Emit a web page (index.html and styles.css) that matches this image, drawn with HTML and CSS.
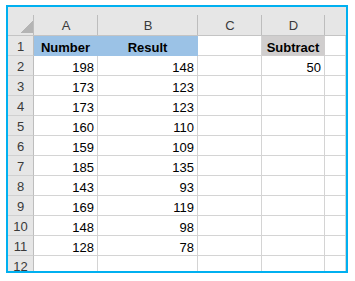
FILE: index.html
```html
<!DOCTYPE html>
<html>
<head>
<meta charset="utf-8">
<link rel="stylesheet" href="styles.css">
</head>
<body>
<div class="frame">
  <div class="sheet">
    <div class="hd corner"><div class="tri"></div></div>
    <div class="hd">A</div>
    <div class="hd">B</div>
    <div class="hd">C</div>
    <div class="hd">D</div>
    <div class="hd last"></div>

    <div class="rh">1</div>
    <div class="c ctr bold blue">Number</div>
    <div class="c ctr bold blue">Result</div>
    <div class="c"></div>
    <div class="c ctr bold grey">Subtract</div>
    <div class="c"></div>

    <div class="rh">2</div><div class="c">198</div><div class="c">148</div><div class="c"></div><div class="c">50</div><div class="c"></div>
    <div class="rh">3</div><div class="c">173</div><div class="c">123</div><div class="c"></div><div class="c"></div><div class="c"></div>
    <div class="rh">4</div><div class="c">173</div><div class="c">123</div><div class="c"></div><div class="c"></div><div class="c"></div>
    <div class="rh">5</div><div class="c">160</div><div class="c">110</div><div class="c"></div><div class="c"></div><div class="c"></div>
    <div class="rh">6</div><div class="c">159</div><div class="c">109</div><div class="c"></div><div class="c"></div><div class="c"></div>
    <div class="rh">7</div><div class="c">185</div><div class="c">135</div><div class="c"></div><div class="c"></div><div class="c"></div>
    <div class="rh">8</div><div class="c">143</div><div class="c">93</div><div class="c"></div><div class="c"></div><div class="c"></div>
    <div class="rh">9</div><div class="c">169</div><div class="c">119</div><div class="c"></div><div class="c"></div><div class="c"></div>
    <div class="rh">10</div><div class="c">148</div><div class="c">98</div><div class="c"></div><div class="c"></div><div class="c"></div>
    <div class="rh">11</div><div class="c">128</div><div class="c">78</div><div class="c"></div><div class="c"></div><div class="c"></div>
    <div class="rh">12</div><div class="c"></div><div class="c"></div><div class="c"></div><div class="c"></div><div class="c"></div>
  </div>
</div>
</body>
</html>
```

FILE: styles.css
```css
html, body {
  margin: 0;
  padding: 0;
  background: #ffffff;
}

body {
  font-family: "Liberation Sans", Arial, sans-serif;
  font-size: 13px;
}

.frame {
  margin: 5px 0 0 6px;
  width: 342px;
  height: 268px;
  box-sizing: border-box;
  border: 2px solid #00b0f0;
  overflow: hidden;
  background: #ffffff;
}

.sheet {
  display: grid;
  grid-template-columns: 26px 64px 100px 64px 63px 1fr;
  grid-template-rows: 29px;
  grid-auto-rows: 20px;
}

.hd {
  box-sizing: border-box;
  display: flex;
  align-items: flex-end;
  justify-content: center;
  padding-bottom: 2px;
  line-height: 15px;
  color: #3a3a3a;
  background: linear-gradient(#bdbdbd, #bdbdbd) right bottom / 1px 20px no-repeat, #e6e6e6;
  border-bottom: 1px solid #c4c4c4;
}

.hd.last {
  background: #e6e6e6;
}

.hd.corner {
  justify-content: flex-end;
  padding: 0 1px 2px 0;
}

.tri {
  width: 12px;
  height: 12px;
  background: linear-gradient(to bottom right, transparent 50%, #b4b4b4 50%);
}

.rh {
  box-sizing: border-box;
  display: flex;
  align-items: flex-end;
  justify-content: center;
  padding-bottom: 1px;
  line-height: 15px;
  color: #3a3a3a;
  background: #e6e6e6;
  border-right: 1px solid #bdbdbd;
  border-bottom: 1px solid #d0d0d0;
}

.c {
  box-sizing: border-box;
  display: flex;
  align-items: flex-end;
  justify-content: flex-end;
  padding-right: 3px;
  line-height: 15px;
  color: #000000;
  white-space: nowrap;
  border-right: 1px solid #d4d4d4;
  border-bottom: 1px solid #d4d4d4;
}

.c.ctr {
  justify-content: center;
  padding-right: 0;
}

.c.bold {
  font-weight: bold;
}

.c.blue {
  background: #9bc2e6;
  border-right-color: #9bc2e6;
  border-bottom-color: #9bc2e6;
}

.c.grey {
  background: #d0cece;
  border-right-color: #d0cece;
  border-bottom-color: #d0cece;
}
```
